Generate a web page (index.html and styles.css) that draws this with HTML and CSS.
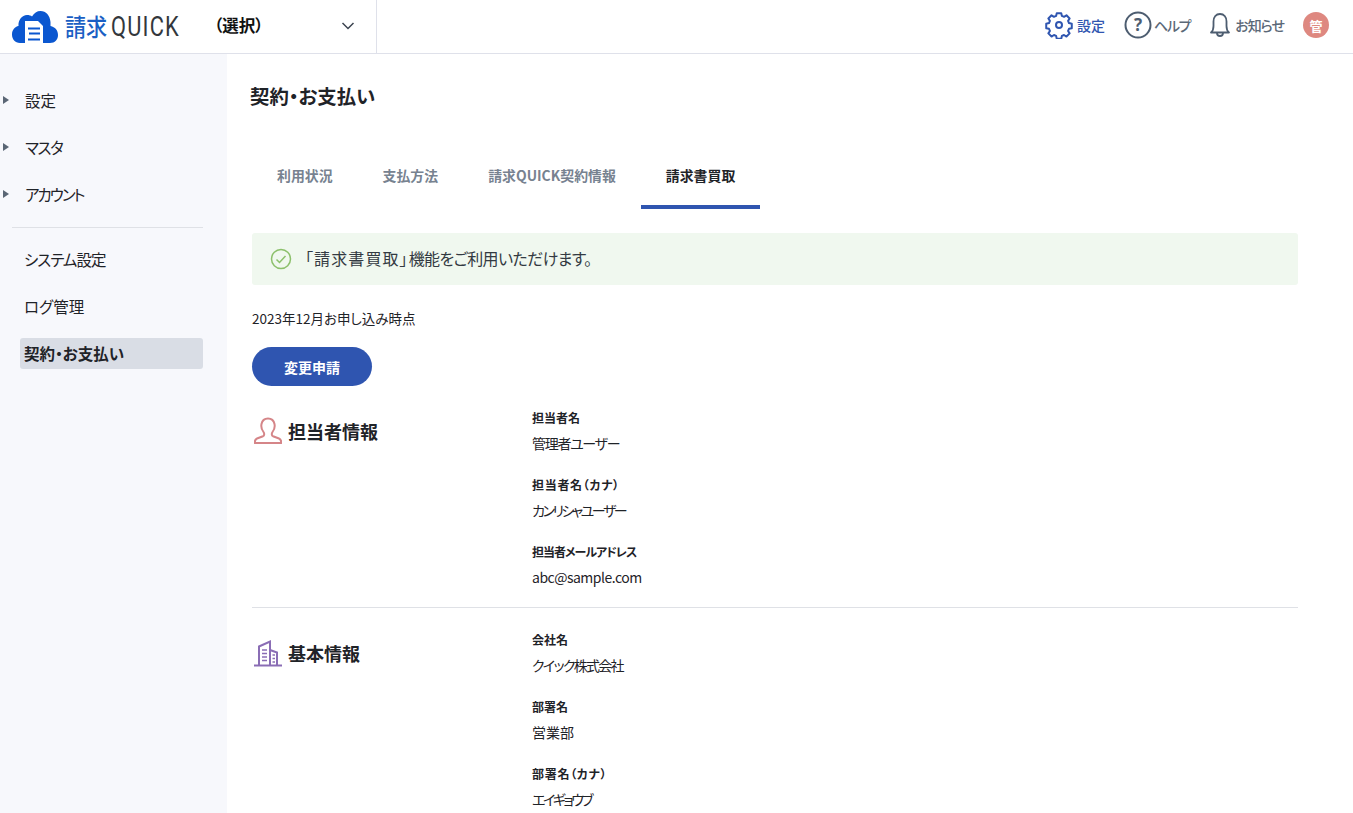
FILE: index.html
```html
<!DOCTYPE html>
<html lang="ja">
<head>
<meta charset="utf-8">
<title>契約・お支払い</title>
<link rel="stylesheet" href="styles.css">
</head>
<body>
<header class="header">
  <div class="brand">
    <svg class="logo-icon" viewBox="0 0 46 32" width="46" height="32"><path fill="#0b57d0" d="M8 32C3 32 0 28 0 23.500 0 19 3 15.500 6.500 15 6 9 10 4 15 4c2 0 4 .5 5 1.500C22 2 25 0 28.500 0 34 0 38 4.500 38.500 11 38.500 13 38.500 14 38.500 15 43 16 46 19 46 24c0 4.500-3 8-8 8z"/><path fill="#fff" d="M13 10h13l5 5v17H13z"/><path fill="#0b57d0" d="M16 16.500h12v2H16zM17 21.500h11v2H17zM16 27.500h12v2H16z"/></svg>
    <span class="logo-kanji">請求</span><span class="logo-quick">QUICK</span>
  </div>
  <div class="selector">
    <span class="selector-label">（選択）</span>
    <svg class="chevron" viewBox="0 0 14 8" width="14" height="8"><path d="M1.500 1l5.500 5.500L12.500 1" fill="none" stroke="#3c4450" stroke-width="1.500"/></svg>
  </div>
  <nav class="tools">
    <a class="tool tool-active">
      <svg viewBox="0 0 28 28" width="28" height="28"><path fill="none" stroke="#2f55b0" stroke-width="2.200" stroke-linejoin="round" d="M11.500 2.500h5l.7 3.100 2.400 1 2.700-1.700 3.500 3.500-1.700 2.700 1 2.400 3.100.7v5l-3.100.7-1 2.400 1.700 2.700-3.500 3.500-2.700-1.700-2.400 1-.7 3.100h-5l-.7-3.100-2.400-1-2.700 1.700-3.500-3.500 1.700-2.700-1-2.400-3.100-.7v-5l3.100-.7 1-2.400-1.700-2.700 3.500-3.500 2.700 1.700 2.400-1z" transform="translate(1.400 -.1) scale(.9)"/><circle cx="14" cy="14" r="3" fill="none" stroke="#2f55b0" stroke-width="2"/></svg>
      <span>設定</span>
    </a>
    <a class="tool tool-help">
      <svg viewBox="0 0 28 28" width="28" height="28"><circle cx="14" cy="14" r="12.500" fill="none" stroke="#4d5d70" stroke-width="2"/><text x="14" y="20" class="help-mark">?</text></svg>
      <span class="tight-m">ヘルプ</span>
    </a>
    <a class="tool tool-bell">
      <svg viewBox="0 0 22 26" width="22" height="26"><path d="M2 20.500c2-1.500 2.500-3 2.500-6.500V9.500C4.500 5 7 2 11 2s6.500 3 6.500 7.500V14c0 3.500.5 5 2.500 6.500z" fill="none" stroke="#4d5d70" stroke-width="1.800" stroke-linejoin="round"/><path d="M8 21c0 4 6 4 6 0" fill="none" stroke="#4d5d70" stroke-width="1.800"/></svg>
      <span class="tight-s">お知らせ</span>
    </a>
    <span class="avatar">管</span>
  </nav>
</header>
<div class="body">
  <aside class="sidebar">
    <ul class="menu">
      <li class="menu-item caret">設定</li>
      <li class="menu-item caret tight-m">マスタ</li>
      <li class="menu-item caret tight-l">アカウント</li>
    </ul>
    <hr class="menu-rule">
    <ul class="menu menu-sub">
      <li class="menu-link tight-s">システム設定</li>
      <li class="menu-link">ログ管理</li>
      <li class="menu-link menu-current">契約・お支払い</li>
    </ul>
  </aside>
  <main class="main">
    <h1 class="title">契約・お支払い</h1>
    <div class="tabs">
      <span class="tab">利用状況</span>
      <span class="tab">支払方法</span>
      <span class="tab">請求QUICK契約情報</span>
      <span class="tab tab-current">請求書買取</span>
    </div>
    <div class="notice">
      <svg viewBox="0 0 22 22" width="22" height="22"><circle cx="11" cy="11" r="9.500" fill="none" stroke="#8cc06c" stroke-width="1.500"/><path d="M6.500 11.500l3 3 6-6.500" fill="none" stroke="#8cc06c" stroke-width="1.500"/></svg>
      <p class="notice-text"><span class="notice-quote">「請求書買取」</span><span class="notice-rest">機能をご利用いただけます。</span></p>
    </div>
    <p class="asof">2023年12月お申し込み時点</p>
    <button class="btn">変更申請</button>
    <section class="block block-person">
      <h2 class="block-title">
        <svg viewBox="0 0 28 28" width="28" height="28"><path d="M9.500 15C7.500 12.500 7 9.500 7.500 7 8.200 3.500 11 1.500 14 1.500s5.800 2 6.500 5.500c.5 2.500 0 5.500-2 8-1 1.300-1 3.500.5 4.200l6 2.300c1.500.6 2.300 2 2.300 4.500H.700c0-2.500.8-3.900 2.300-4.500l6-2.300c1.500-.7 1.500-2.900.5-4.200z" fill="none" stroke="#d58588" stroke-width="2" stroke-linejoin="round"/></svg>
        <span>担当者情報</span>
      </h2>
      <dl class="fields">
        <div class="field"><dt>担当者名</dt><dd class="tight-t">管理者ユーザー</dd></div>
        <div class="field"><dt class="wide">担当者名（カナ）</dt><dd class="tight-x">カンリシャユーザー</dd></div>
        <div class="field"><dt class="tight-s">担当者メールアドレス</dt><dd class="tight-xs">abc@sample.com</dd></div>
      </dl>
    </section>
    <section class="block block-company">
      <h2 class="block-title">
        <svg viewBox="0 0 28 28" width="28" height="28"><g fill="none" stroke="#8a6db5" stroke-width="2"><path d="M0 26.500h28"/><path d="M5 26V7.500L16 2.500V26M16 11l7 2.500V26"/><path d="M8 11h5M8 14.500h5M8 18h5M8 21.500h5M18.500 16h2.500M18.500 19.500h2.500M18.500 23h2.500" stroke-width="1.500"/></g></svg>
        <span>基本情報</span>
      </h2>
      <dl class="fields">
        <div class="field"><dt>会社名</dt><dd class="tight-u">クイック株式会社</dd></div>
        <div class="field"><dt>部署名</dt><dd>営業部</dd></div>
        <div class="field"><dt class="wide">部署名（カナ）</dt><dd class="tight-x">エイギョウブ</dd></div>
      </dl>
    </section>
  </main>
</div>
</body>
</html>
```
FILE: styles.css
```css
* { box-sizing: border-box; }
html, body { height: 100%; }
body {
  margin: 0;
  height: 813px;
  overflow: hidden;
  background: #fff;
  color: #1f2328;
  font-family: "Noto Sans CJK JP", "Noto Sans", sans-serif;
  font-feature-settings: "palt";
}
ul, dl, dd, p, h1, h2 { margin: 0; padding: 0; }
ul { list-style: none; }

.tight-xs { letter-spacing: -.5px; }
.tight-s { letter-spacing: -1px; }
.tight-t { letter-spacing: -1.300px; }
.tight-m { letter-spacing: -1.300px; }
.tight-u { letter-spacing: -1.700px; }
.tight-l { letter-spacing: -2px; }
.tight-x { letter-spacing: -2.500px; }
.wide { letter-spacing: .7px; }

.header {
  display: flex;
  align-items: center;
  height: 54px;
  border-bottom: 1px solid #dfe1ea;
}
.brand {
  display: flex;
  align-items: center;
  width: 216px;
  height: 53px;
  padding-left: 12px;
}
.logo-icon { margin-right: 7px; flex: none; }
.logo-kanji { font-size: 24px; font-weight: 500; color: #1b5fc4; transform: scaleX(.88); transform-origin: left center; margin-right: -2px; margin-bottom: 2px; }
.logo-quick { font-family: "Roboto", sans-serif; font-size: 28px; font-weight: 400; color: #33373c; letter-spacing: 1.500px; transform: scaleX(.78); transform-origin: left center; margin-bottom: 1px; }
.selector {
  display: flex;
  align-items: center;
  justify-content: space-between;
  width: 161px;
  height: 53px;
  padding-right: 21px;
  border-right: 1px solid #dfe1ea;
}
.selector-label { font-size: 16.500px; font-weight: 700; color: #111; margin-left: -2px; margin-bottom: 3px; }
.chevron { margin-bottom: 2px; }
.tools {
  margin-left: auto;
  display: flex;
  align-items: center;
  padding-right: 24px;
  padding-bottom: 3px;
}
.tool {
  display: flex;
  align-items: center;
  font-size: 14px;
  font-weight: 500;
  color: #5b6877;
}
.tool-active { color: #2f55b0; gap: 4px; margin-right: 19px; }
.tool-help { gap: 2px; margin-right: 19px; }
.tool-bell { gap: 4px; margin-right: 19px; }
.help-mark { font-family: "Noto Sans", sans-serif; font-size: 17px; font-weight: 700; fill: #4d5d70; text-anchor: middle; }
.avatar {
  display: flex;
  align-items: center;
  justify-content: center;
  width: 26px;
  height: 26px;
  border-radius: 50%;
  background: #de8880;
  color: #fff;
  font-size: 13px;
  font-weight: 700;
}

.body { display: flex; height: 759px; }
.sidebar {
  flex: none;
  width: 227px;
  background: #f7f8fc;
  padding-top: 23px;
}
.menu-item {
  position: relative;
  height: 47px;
  line-height: 47px;
  padding-left: 25px;
  font-size: 15.500px;
}
.caret::before {
  content: "";
  position: absolute;
  left: 3px;
  top: 19px;
  border-left: 6px solid #5a6675;
  border-top: 4.500px solid transparent;
  border-bottom: 4.500px solid transparent;
}
.menu-rule {
  margin: 9px 24px 8px 12px;
  border: 0;
  border-top: 1px solid #dfe1e6;
}
.menu-sub { margin-top: 16px; padding-left: 20px; padding-right: 24px; }
.menu-link {
  height: 31px;
  line-height: 31px;
  padding-left: 4px;
  margin-bottom: 16px;
  font-size: 15.500px;
  border-radius: 3px;
}
.menu-current { background: #d9dde5; font-weight: 700; }

.main { flex: 1; padding: 0 55px 0 25px; min-width: 0; }
.title { font-size: 19.400px; font-weight: 700; line-height: 28px; padding-top: 28px; height: 56px; margin-left: -2px; }
.tabs { display: flex; margin-top: 25px; height: 74px; align-items: stretch; }
.tab {
  display: flex;
  align-items: center;
  padding: 10px 25px 0;
  font-size: 13.900px;
  font-weight: 700;
  color: #778290;
  border-bottom: 4px solid transparent;
}
.tab-current { color: #1f2328; border-bottom-color: #2f55b0; }
.notice {
  display: flex;
  align-items: center;
  gap: 13px;
  height: 52px;
  margin-top: 24px;
  padding-left: 18px;
  background: #f0f8ef;
  border-radius: 3px;
  font-size: 16px;
  color: #333a42;
}
.notice-text { margin-bottom: 2px; }
.notice-quote { letter-spacing: 1.100px; }
.notice-rest { letter-spacing: -.6px; }
.asof { margin-top: 23px; font-size: 13.500px; line-height: 20px; }
.btn {
  display: block;
  width: 120px;
  height: 39px;
  margin-top: 19px;
  border: 0;
  border-radius: 20px;
  background: #2f55b0;
  color: #fff;
  font: inherit;
  font-size: 14px;
  font-weight: 700;
}
.block { display: flex; }
.block-person { margin-top: 22px; padding-bottom: 18px; border-bottom: 1px solid #dfe1e6; }
.block-company { margin-top: 22px; }
.block-title {
  display: flex;
  align-items: center;
  gap: 6px;
  width: 280px;
  height: 28px;
  margin-top: 9px;
  padding-left: 2px;
  font-size: 18px;
  font-weight: 700;
}
.field { margin-bottom: 20px; }
.field:last-child { margin-bottom: 0; }
.field dt { font-size: 12px; font-weight: 700; line-height: 20px; }
.field dd { font-size: 14px; line-height: 24px; margin-top: 3px; }
```
